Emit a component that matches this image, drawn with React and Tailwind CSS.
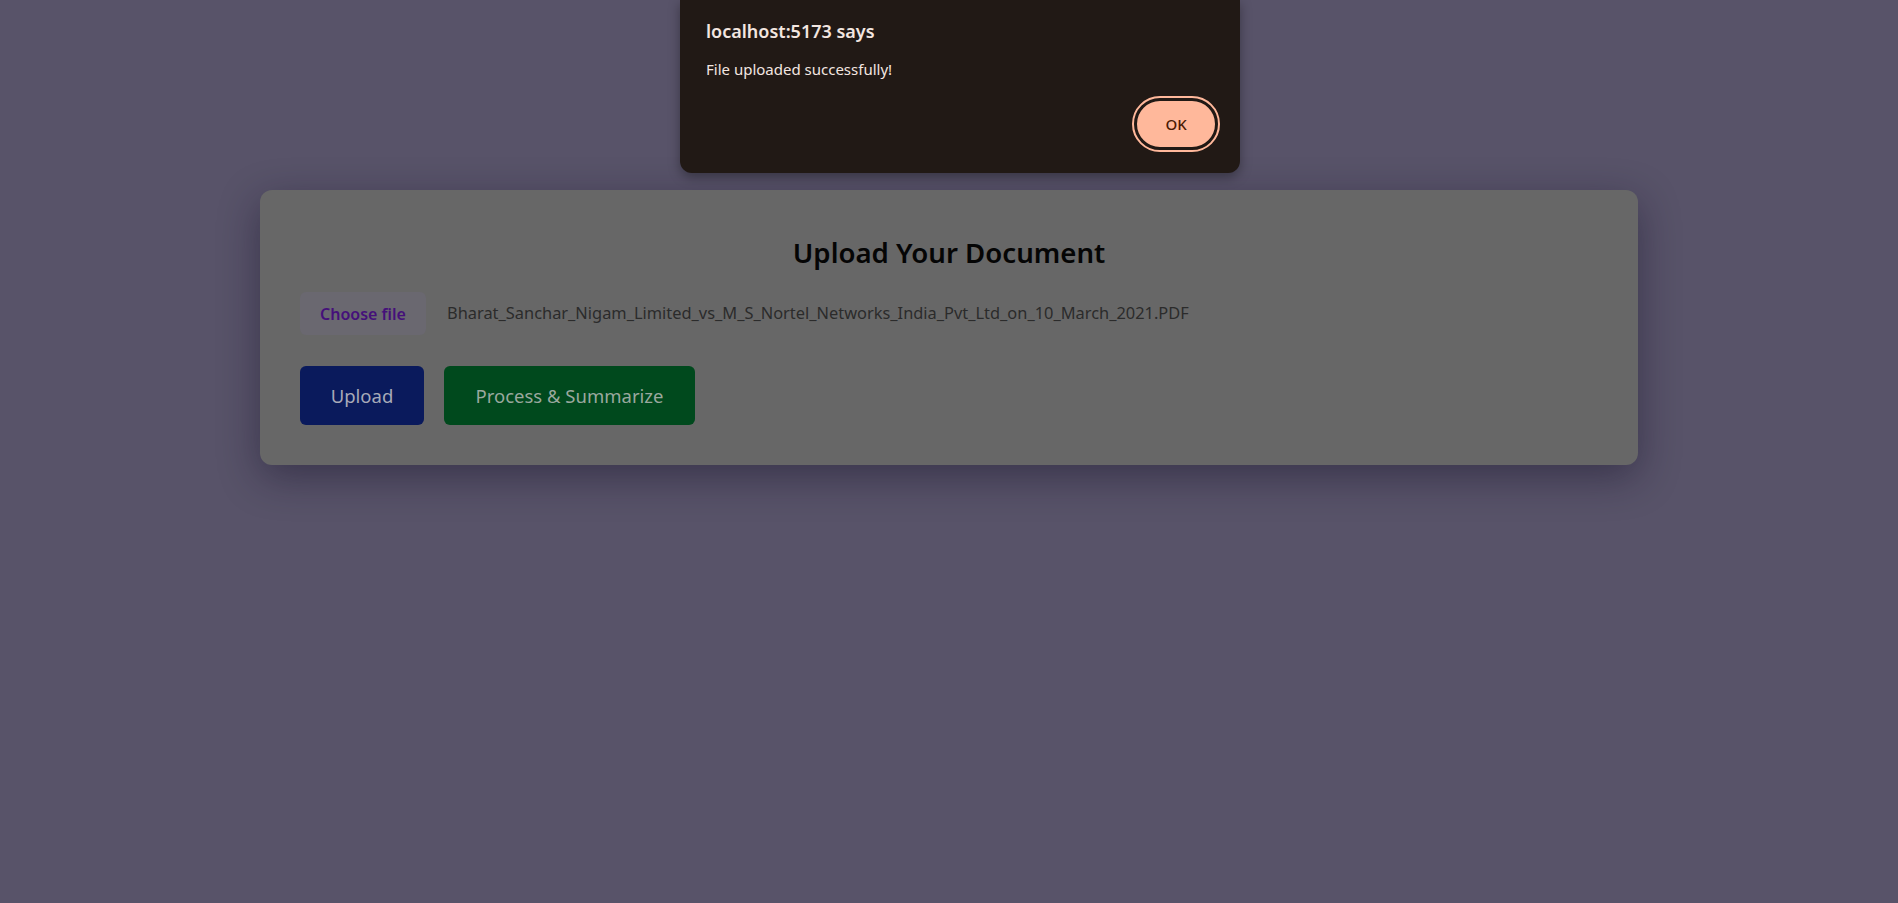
const FILE_NAME =
  "Bharat_Sanchar_Nigam_Limited_vs_M_S_Nortel_Networks_India_Pvt_Ltd_on_10_March_2021.PDF";

const AlertDialog = () => {
  return (
    <div className="absolute top-0 left-[680px] w-[560px] h-[173px] bg-[#211915] rounded-b-[12px] shadow-[0_4px_12px_rgba(0,0,0,0.35)] px-[26px] pt-[18px]">
      <h2 className="text-[#f3e6e0] text-[18px] font-semibold leading-[26px]">localhost:5173 says</h2>
      <p className="text-[#f3e6e0] text-[15px] mt-[14px] leading-[22px]">File uploaded successfully!</p>
      <div className="flex justify-end mt-[18px] -mr-[4px]">
        <button className="w-[84px] h-[52px] rounded-full bg-[#ffb89b] text-[#4a1a04] text-[15px] font-medium border-[3px] border-[#211915] outline-2 outline-[#ffb89b]">
          OK
        </button>
      </div>
    </div>
  );
};

export default function App() {
  return (
    <div
      className="relative min-h-screen w-full bg-[#585369] pt-[190px]"
      style={{ fontFamily: '"Noto Sans", "Open Sans", sans-serif' }}
    >
      <div className="mx-auto w-[1378px] h-[275px] bg-[#676767] rounded-[12px] shadow-[0_12px_40px_rgba(20,15,40,0.45)] px-[40px] pt-[40px]">
        <h1 className="text-center text-[27.6px] font-semibold text-[#050505] leading-[44px]">
          Upload Your Document
        </h1>
        <div className="flex items-center mt-[18px]">
          <span className="h-[43px] w-[126px] flex items-center justify-center rounded-[6px] bg-[#6a6870] text-[#45107a] text-[16px] font-semibold">
            Choose file
          </span>
          <span className="ml-[21px] text-[#2b2b2b] text-[16.4px]">{FILE_NAME}</span>
        </div>
        <div className="flex gap-[20px] mt-[31px]">
          <button className="h-[59px] w-[124px] rounded-[6px] bg-[#0a1a5c] text-[#a8aab8] text-[18.5px]">
            Upload
          </button>
          <button className="h-[59px] w-[251px] rounded-[6px] bg-[#00491d] text-[#9aa89e] text-[18.5px]">
            Process &amp; Summarize
          </button>
        </div>
      </div>
      <AlertDialog />
    </div>
  );
}
